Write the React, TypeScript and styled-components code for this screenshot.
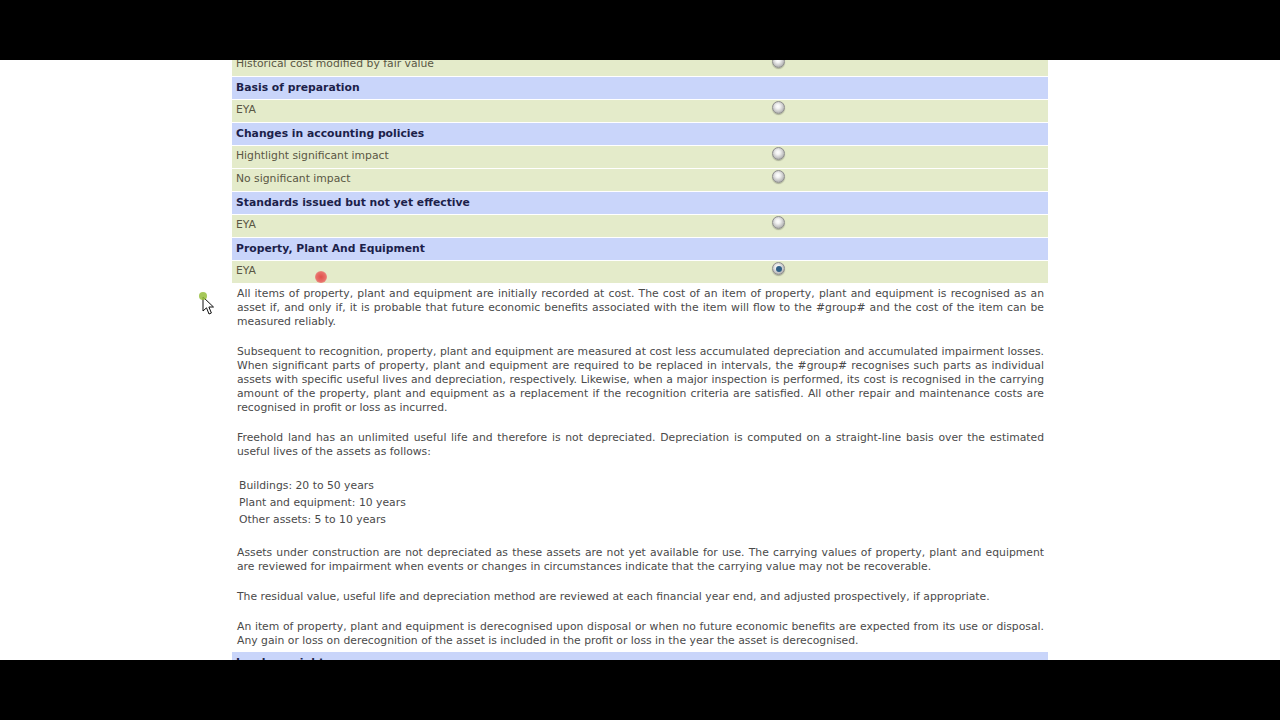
import styled, { createGlobalStyle } from "styled-components";

const GlobalStyle = createGlobalStyle`
  html, body {
    margin: 0;
    padding: 0;
    background: #000;
  }
  * {
    box-sizing: border-box;
  }
`;

type Item =
  | { kind: "header"; label: string }
  | { kind: "option"; label: string; checked?: boolean };

const items: Item[] = [
  { kind: "option", label: "Historical cost modified by fair value" },
  { kind: "header", label: "Basis of preparation" },
  { kind: "option", label: "EYA" },
  { kind: "header", label: "Changes in accounting policies" },
  { kind: "option", label: "Hightlight significant impact" },
  { kind: "option", label: "No significant impact" },
  { kind: "header", label: "Standards issued but not yet effective" },
  { kind: "option", label: "EYA" },
  { kind: "header", label: "Property, Plant And Equipment" },
  { kind: "option", label: "EYA", checked: true },
];

const paragraphs: string[][] = [
  [
    "All items of property, plant and equipment are initially recorded at cost. The cost of an item of property, plant and equipment is recognised as an",
    "asset if, and only if, it is probable that future economic benefits associated with the item will flow to the #group# and the cost of the item can be",
    "measured reliably.",
  ],
  [
    "Subsequent to recognition, property, plant and equipment are measured at cost less accumulated depreciation and accumulated impairment losses.",
    "When significant parts of property, plant and equipment are required to be replaced in intervals, the #group# recognises such parts as individual",
    "assets with specific useful lives and depreciation, respectively. Likewise, when a major inspection is performed, its cost is recognised in the carrying",
    "amount of the property, plant and equipment as a replacement if the recognition criteria are satisfied. All other repair and maintenance costs are",
    "recognised in profit or loss as incurred.",
  ],
  [
    "Freehold land has an unlimited useful life and therefore is not depreciated. Depreciation is computed on a straight-line basis over the estimated",
    "useful lives of the assets as follows:",
  ],
];

const lives = [
  "Buildings: 20 to 50 years",
  "Plant and equipment: 10 years",
  "Other assets: 5 to 10 years",
];

const tailParagraphs: string[][] = [
  [
    "Assets under construction are not depreciated as these assets are not yet available for use. The carrying values of property, plant and equipment",
    "are reviewed for impairment when events or changes in circumstances indicate that the carrying value may not be recoverable.",
  ],
  [
    "The residual value, useful life and depreciation method are reviewed at each financial year end, and adjusted prospectively, if appropriate.",
  ],
  [
    "An item of property, plant and equipment is derecognised upon disposal or when no future economic benefits are expected from its use or disposal.",
    "Any gain or loss on derecognition of the asset is included in the profit or loss in the year the asset is derecognised.",
  ],
];

export default function App() {
  return (
    <>
      <GlobalStyle />
      <Screen>
        <Letterbox />
        <Viewport>
          <Page>
            <OptionTable>
              {items.map((it, i) =>
                it.kind === "header" ? (
                  <HeaderRow key={i}>{it.label}</HeaderRow>
                ) : (
                  <OptionRow key={i}>
                    <OptionLabel>{it.label}</OptionLabel>
                    <RadioCell>
                      <Radio $checked={!!it.checked} />
                    </RadioCell>
                  </OptionRow>
                )
              )}
            </OptionTable>

            <Policy>
              {paragraphs.map((lines, i) => (
                <Para key={i}>
                  {lines.map((l, j) => (
                    <Line key={j}>{l}</Line>
                  ))}
                </Para>
              ))}
              <LivesList>
                {lives.map((l) => (
                  <LifeItem key={l}>{l}</LifeItem>
                ))}
              </LivesList>
              {tailParagraphs.map((lines, i) => (
                <Para key={i}>
                  {lines.map((l, j) => (
                    <Line key={j}>{l}</Line>
                  ))}
                </Para>
              ))}
            </Policy>

            <NextTable>
              <HeaderRow>Land use rights</HeaderRow>
            </NextTable>
          </Page>

          <ClickMark />
          <Pointer>
            <PointerDot />
            <svg width="14" height="20" viewBox="0 0 14 20">
              <path
                d="M1 1 L1 15 L4.5 11.8 L7 18 L9.4 17 L6.9 11 L11.5 11 Z"
                fill="#fff"
                stroke="#111"
                strokeWidth="1"
                strokeLinejoin="round"
              />
            </svg>
          </Pointer>
        </Viewport>
        <Letterbox />
      </Screen>
    </>
  );
}

const Screen = styled.div`
  width: 1280px;
  height: 720px;
  display: flex;
  flex-direction: column;
  background: #000;
  overflow: hidden;
`;

const Letterbox = styled.div`
  height: 60px;
  flex: none;
  background: #000;
`;

const Viewport = styled.div`
  position: relative;
  height: 600px;
  flex: none;
  background: #fff;
  overflow: hidden;
`;

const Page = styled.div`
  width: 816px;
  margin-left: 232px;
  margin-top: -6px;
  font-family: "DejaVu Sans", Verdana, sans-serif;
  font-size: 10.8px;
`;

const OptionTable = styled.div`
  display: flex;
  flex-direction: column;
  gap: 1px;
`;

const HeaderRow = styled.div`
  height: 22px;
  line-height: 22px;
  padding-left: 4px;
  background: #c9d5fa;
  color: #1c1f4a;
  font-weight: bold;
`;

const OptionRow = styled.div`
  height: 22px;
  display: grid;
  grid-template-columns: 540px 1fr;
  align-items: center;
  background: #e4ebca;
`;

const OptionLabel = styled.div`
  padding-left: 4px;
  padding-bottom: 3px;
  color: #5a5744;
`;

const RadioCell = styled.div`
  display: flex;
  align-items: center;
  padding-bottom: 7px;
`;

const Radio = styled.span<{ $checked: boolean }>`
  position: relative;
  display: block;
  width: 13px;
  height: 13px;
  border-radius: 50%;
  border: 1px solid #8e8e8e;
  background: radial-gradient(
    circle at 45% 40%,
    #ffffff 0%,
    #f2f2f2 25%,
    #c4c4c4 60%,
    #8a8a8a 100%
  );
  box-shadow: 0 1px 1px rgba(0, 0, 0, 0.25);

  &::after {
    content: "";
    position: absolute;
    left: 2.5px;
    top: 2.5px;
    width: 6px;
    height: 6px;
    border-radius: 50%;
    background: ${(p) => (p.$checked ? "#2f5f86" : "transparent")};
  }
`;

const Policy = styled.div`
  padding: 4px 4px 0 5px;
  color: #4a4a4a;
  line-height: 14px;
`;

const Para = styled.div`
  margin-bottom: 16px;
`;

const Line = styled.span`
  display: block;
  white-space: nowrap;
  text-align: justify;
  text-align-last: justify;

  &:last-child {
    text-align-last: left;
  }
`;

const LivesList = styled.div`
  padding-left: 2px;
  margin-bottom: 18px;
  margin-top: 18px;
`;

const LifeItem = styled.div`
  line-height: 17px;
`;

const NextTable = styled.div`
  margin-top: -12px;
`;

const ClickMark = styled.div`
  position: absolute;
  left: 315px;
  top: 211px;
  width: 12px;
  height: 12px;
  border-radius: 50%;
  background: radial-gradient(circle, #e0504a 0%, #e8706a 55%, rgba(240, 140, 130, 0.4) 100%);
`;

const Pointer = styled.div`
  position: absolute;
  left: 202px;
  top: 236px;
`;

const PointerDot = styled.div`
  position: absolute;
  left: -3px;
  top: -4px;
  width: 8px;
  height: 8px;
  border-radius: 50%;
  background: rgba(150, 190, 60, 0.85);
`;
